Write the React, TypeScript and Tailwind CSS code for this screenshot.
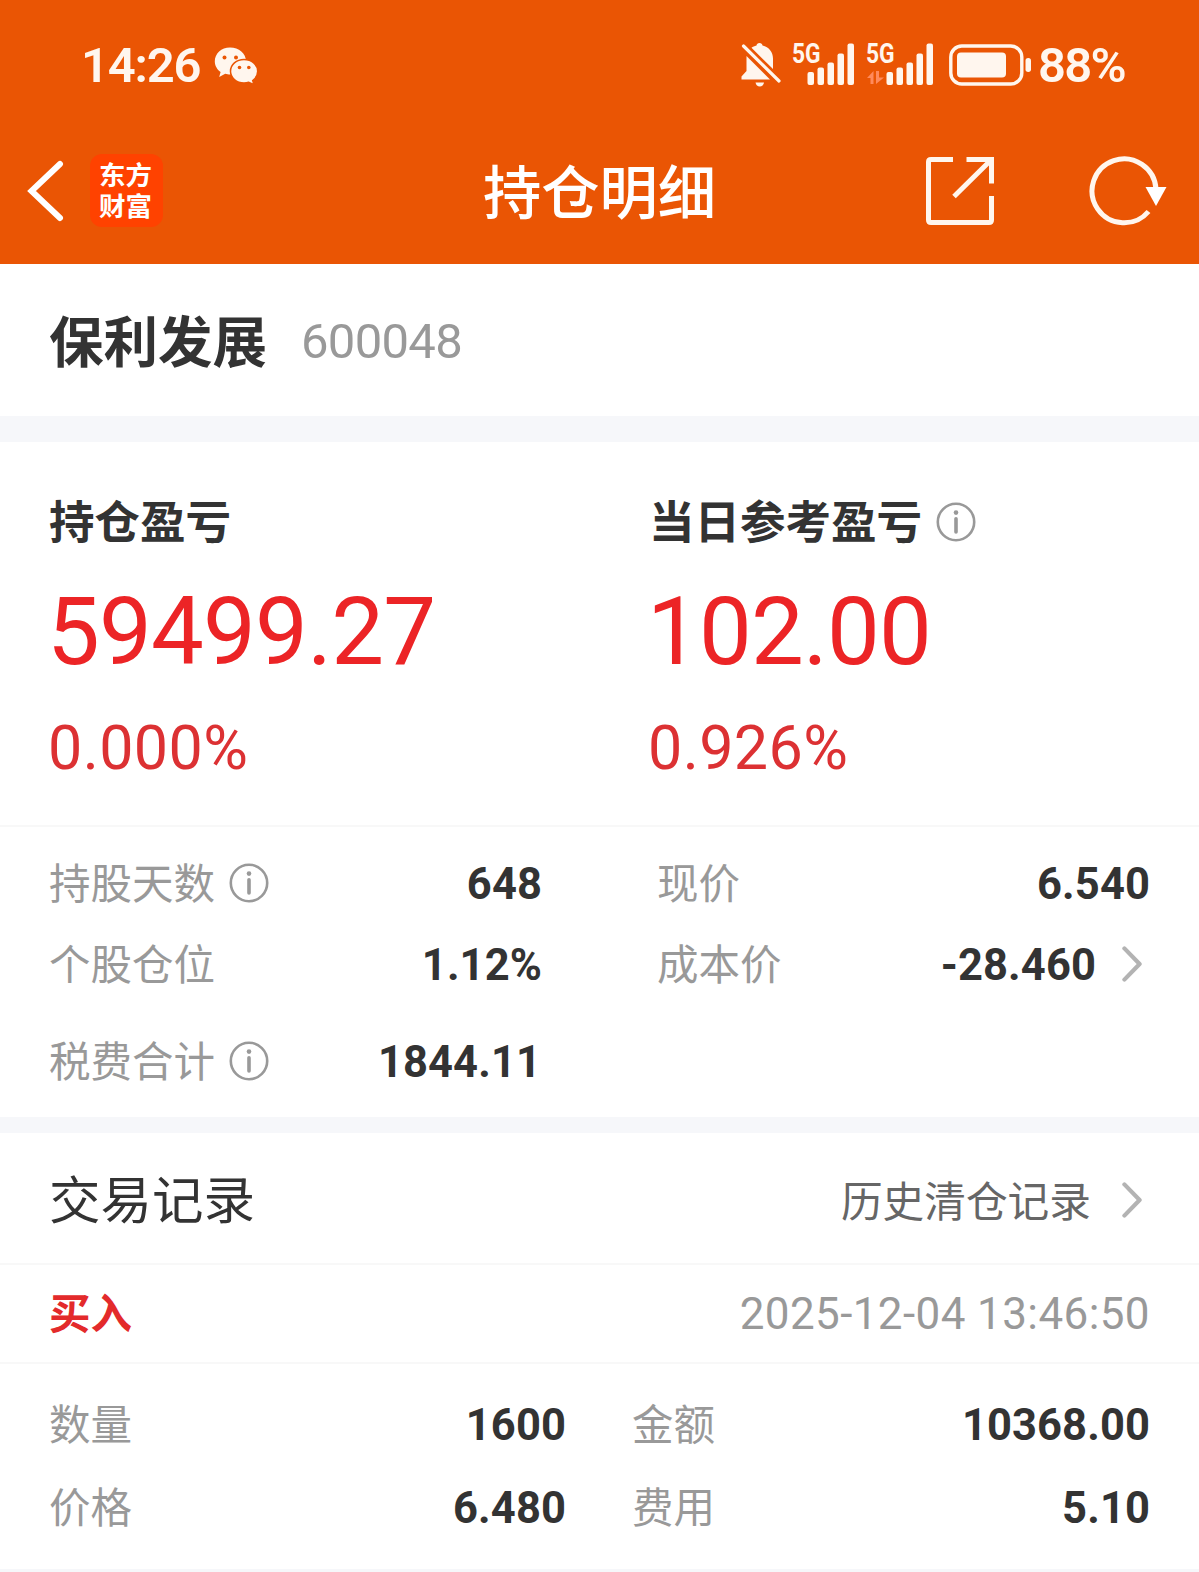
import type { ReactNode } from "react";

type Field = {
  label: string;
  value?: string;
  info?: boolean;
  arrow?: boolean;
};

const InfoIcon = () => (
  <svg width="40" height="40" viewBox="0 0 40 40" fill="none">
    <circle cx="20" cy="20" r="18.2" stroke="#999" strokeWidth="2.6" />
    <circle cx="20" cy="10.6" r="2.3" fill="#999" />
    <path d="M20 16.8V30" stroke="#999" strokeWidth="3.6" strokeLinecap="round" />
  </svg>
);

const ArrowIcon = () => (
  <svg width="20" height="36" viewBox="0 0 20 36" fill="none">
    <path
      d="M2.4 2.4L17.6 18L2.4 33.6"
      stroke="#b3b3b3"
      strokeWidth="4.2"
      strokeLinecap="round"
      strokeLinejoin="round"
    />
  </svg>
);

const Signal = ({ data }: { data?: boolean }) => (
  <div className="relative">
    <svg
      width={data ? 67 : 62}
      height="44"
      viewBox={data ? "0 0 67 44" : "0 0 62 44"}
      fill="#fff6ee"
    >
      {data && (
        <path d="M0 35l6.5-7v13h-3v-6zM9 28v13l8-6.5h-5V28z" fill="#ff8a5c" />
      )}
      <g transform={data ? "translate(19.5 0)" : "translate(14.5 0)"}>
        <rect x="0" y="29" width="6.5" height="13" rx="2" />
        <rect x="10" y="24.5" width="6.5" height="17.5" rx="2" />
        <rect x="20" y="19.5" width="6.5" height="22.5" rx="2" />
        <rect x="30" y="10.5" width="6.5" height="31.5" rx="2" />
        <rect x="40" y="0.5" width="6.5" height="41.5" rx="2" />
      </g>
    </svg>
    <span className="absolute -top-[3px] -left-px origin-left scale-x-[0.8] font-[Roboto,sans-serif] text-[28.5px] font-bold leading-none">
      5G
    </span>
  </div>
);

const StatusBar = () => (
  <div className="flex h-[130px] items-center pl-[81px] pr-[74px] text-[#fff6ee]">
    <span className="w-[120px] whitespace-nowrap font-[Roboto,sans-serif] text-[49px] font-semibold leading-none tracking-[-1.2px]">
      14:26
    </span>
    <svg className="ml-[13px] mt-[2px]" width="45" height="38" viewBox="0 0 45 38">
      <path
        d="M16 .5C7.300 .5 .8 6.600 .8 14.300c0 4.400 2.300 8.300 5.800 10.800L5.200 30l6-3.200c1.600.4 3.200.7 5.300.7C27 27.500 32 21.500 32 14.300 32 6.500 25 .5 16 .5z"
        fill="#fff6ee"
      />
      <circle cx="10.5" cy="10.5" r="2" fill="#ea5504" />
      <circle cx="22" cy="10.5" r="2" fill="#ea5504" />
      <path
        d="M30 12.500c-7.600 0-13.500 5.200-13.500 11.800S22.400 36 30 36c1.700 0 3.200-.2 4.700-.7l5.300 2.500-1.300-4.300c3.200-2.200 5-5.400 5-9.200 0-6.600-6.100-11.800-13.700-11.800z"
        fill="#fff6ee"
        stroke="#ea5504"
        strokeWidth="1.5"
      />
      <circle cx="25.5" cy="20.5" r="1.8" fill="#ea5504" />
      <circle cx="34.8" cy="20.5" r="1.8" fill="#ea5504" />
    </svg>
    <div className="ml-auto flex items-center">
      <svg width="40" height="44" viewBox="0 0 40 44" fill="#fff6ee">
        <path d="M18.500 0c1.800 0 2.800 1 3 2.500C28 4 32 9 32 15.500V26L10.500 4.800c1.300-1 3-1.900 5-2.300C15.700 1 16.700 0 18.500 0z" />
        <path d="M5.500 13L29 36.500H0.500V33.500L5.500 28z" />
        <path d="M14.500 39.500h8.500c-.5 2.600-2 4-4.200 4s-3.800-1.400-4.300-4z" />
        <path d="M2.500 3L38 38" stroke="#fff6ee" strokeWidth="3.2" strokeLinecap="round" />
      </svg>
      <div className="ml-[12px] flex gap-3">
        <Signal />
        <Signal data />
      </div>
      <svg className="ml-[15px]" width="83" height="42" viewBox="0 0 83 42" fill="none">
        <rect x="1.8" y="2" width="71" height="38" rx="11" stroke="#fff6ee" strokeWidth="3.4" />
        <rect x="8" y="8.5" width="49" height="25" rx="4" fill="#fff6ee" />
        <rect x="76.5" y="14" width="5.5" height="14" rx="2.7" fill="#fff6ee" />
      </svg>
      <span className="ml-[6px] w-[87px] whitespace-nowrap font-[Roboto,sans-serif] text-[49px] font-semibold leading-none tracking-[-1.7px]">
        88%
      </span>
    </div>
  </div>
);

const NavBar = () => (
  <div className="grid h-[134px] grid-cols-[1fr_auto_1fr] items-center pb-[13px] text-white">
    <div className="flex items-center pl-[27px]">
      <svg width="38" height="62" viewBox="0 0 38 62" fill="none">
        <path
          d="M33 4L4.500 31L33 58"
          stroke="white"
          strokeWidth="6"
          strokeLinecap="round"
          strokeLinejoin="miter"
        />
      </svg>
      <div className="ml-[25px] h-[73px] w-[73px] rounded-[12px] bg-[#ff4200] pl-[9px] pt-[4px] text-[26.5px] font-bold leading-[31px]">
        东方
        <br />
        财富
      </div>
    </div>
    <h1 className="pb-[3px] text-[58.3px] font-medium leading-none">持仓明细</h1>
    <div className="flex items-center justify-end pr-[32px]">
      <svg width="70" height="70" viewBox="0 0 70 70" fill="none" stroke="#fff6ee" strokeWidth="5">
        <path d="M28 3.500H6Q3.500 3.500 3.500 6V64Q3.500 66.500 6 66.500H64Q66.500 66.500 66.500 64V40" />
        <path d="M41.500 3.500H66.500V27.500M66 4L29 40.500" />
      </svg>
      <svg className="ml-[93px]" width="79" height="70" viewBox="0 0 79 70" fill="none">
        <path d="M68 33A32 32 0 1 0 60.500 55.500" stroke="#fff6ee" strokeWidth="5" />
        <path d="M57.500 31H78.500L68 50z" fill="white" />
      </svg>
    </div>
  </div>
);

const ProfitBlock = ({
  title,
  amount,
  percent,
  info,
}: {
  title: string;
  amount: string;
  percent: string;
  info?: boolean;
}) => (
  <div className="w-[600px] shrink-0">
    <div className="flex h-[50px] items-center gap-[14px]">
      <h2 className="pb-[4px] text-[45.5px] font-bold leading-none">{title}</h2>
      {info && <InfoIcon />}
    </div>
    <div className="-ml-[2px] mt-[35px] font-[Roboto,sans-serif] text-[94px] leading-[100px] tracking-[-0.8px] text-[#ec2426]">
      {amount}
    </div>
    <div className="-ml-px mt-[31px] font-[Roboto,sans-serif] text-[61px] leading-[70px] tracking-[0.4px] text-[#dc3133]">
      {percent}
    </div>
  </div>
);

const FieldItem = ({
  field: { label, value, info, arrow },
  className,
}: {
  field: Field;
  className?: string;
}) => (
  <div className={`flex items-center ${className ?? ""}`}>
    <span className="pb-1.5 text-[41.5px] leading-none text-[#999]">{label}</span>
    {info && (
      <span className="ml-[14px] pb-1">
        <InfoIcon />
      </span>
    )}
    <span className="ml-auto font-[Roboto,sans-serif] text-[43.5px] font-bold leading-none tracking-[0.1px]">
      {value}
    </span>
    {arrow && (
      <span className="ml-[26px] mr-[8px] pb-1">
        <ArrowIcon />
      </span>
    )}
  </div>
);

const Row = ({ className, children }: { className: string; children: ReactNode }) => (
  <div className={`flex items-center justify-between pl-[49px] pr-[49px] ${className}`}>
    {children}
  </div>
);

const App = () => {
  return (
    <div className="h-[1572px] w-[1199px] overflow-hidden bg-white font-['Noto_Sans_CJK_SC',sans-serif] text-[#333]">
      <header className="h-[264px] bg-[#ea5504]">
        <StatusBar />
        <NavBar />
      </header>

      <div className="flex h-[152px] items-center pl-[49px]">
        <span className="pb-[2px] text-[54.5px] font-bold leading-none">保利发展</span>
        <span className="ml-[34px] pt-[2px] font-[Roboto,sans-serif] text-[49px] leading-none tracking-[-0.7px] text-[#999]">
          600048
        </span>
      </div>
      <div className="h-[26px] bg-[#f6f7fa]" />

      <section className="flex h-[383px] pl-[49px] pt-[55px]">
        <ProfitBlock title="持仓盈亏" amount="59499.27" percent="0.000%" />
        <ProfitBlock title="当日参考盈亏" amount="102.00" percent="0.926%" info />
      </section>

      <section className="h-[292px] border-t-2 border-[#f8f8f8] pt-[17px]">
        <Row className="h-[81px]">
          <FieldItem field={{ label: "持股天数", value: "648", info: true }} className="w-[493px]" />
          <FieldItem field={{ label: "现价", value: "6.540" }} className="w-[493px]" />
        </Row>
        <Row className="h-[81px]">
          <FieldItem field={{ label: "个股仓位", value: "1.12%" }} className="w-[493px]" />
          <FieldItem field={{ label: "成本价", value: "-28.460", arrow: true }} className="w-[493px]" />
        </Row>
        <Row className="h-[113px]">
          <FieldItem field={{ label: "税费合计", value: "1844.11", info: true }} className="w-[492px]" />
        </Row>
      </section>
      <div className="h-[16px] bg-[#f6f7fa]" />

      <Row className="h-[130px]">
        <h2 className="pb-[3px] text-[51.5px] leading-none">交易记录</h2>
        <div className="flex items-center pt-[6px]">
          <span className="pb-[2px] text-[41.7px] leading-none text-[#666]">历史清仓记录</span>
          <span className="ml-[31px] mr-[8px] pb-[2px]">
            <ArrowIcon />
          </span>
        </div>
      </Row>
      <Row className="h-[99px] border-t-2 border-[#f8f8f8]">
        <span className="pb-[3px] text-[41.5px] font-bold leading-none text-[#e32a2b]">买入</span>
        <span className="pt-px font-[Roboto,sans-serif] text-[44px] leading-none tracking-[0.4px] text-[#999]">
          2025-12-04 13:46:50
        </span>
      </Row>
      <section className="h-[207px] border-t-2 border-[#f8f8f8] pt-[20px]">
        <Row className="h-[83px]">
          <FieldItem field={{ label: "数量", value: "1600" }} className="w-[517px]" />
          <FieldItem field={{ label: "金额", value: "10368.00" }} className="w-[518px]" />
        </Row>
        <Row className="h-[83px]">
          <FieldItem field={{ label: "价格", value: "6.480" }} className="w-[517px]" />
          <FieldItem field={{ label: "费用", value: "5.10" }} className="w-[518px]" />
        </Row>
      </section>
      <div className="h-[3px] bg-[#f6f7fa]" />
    </div>
  );
};

export default App;
